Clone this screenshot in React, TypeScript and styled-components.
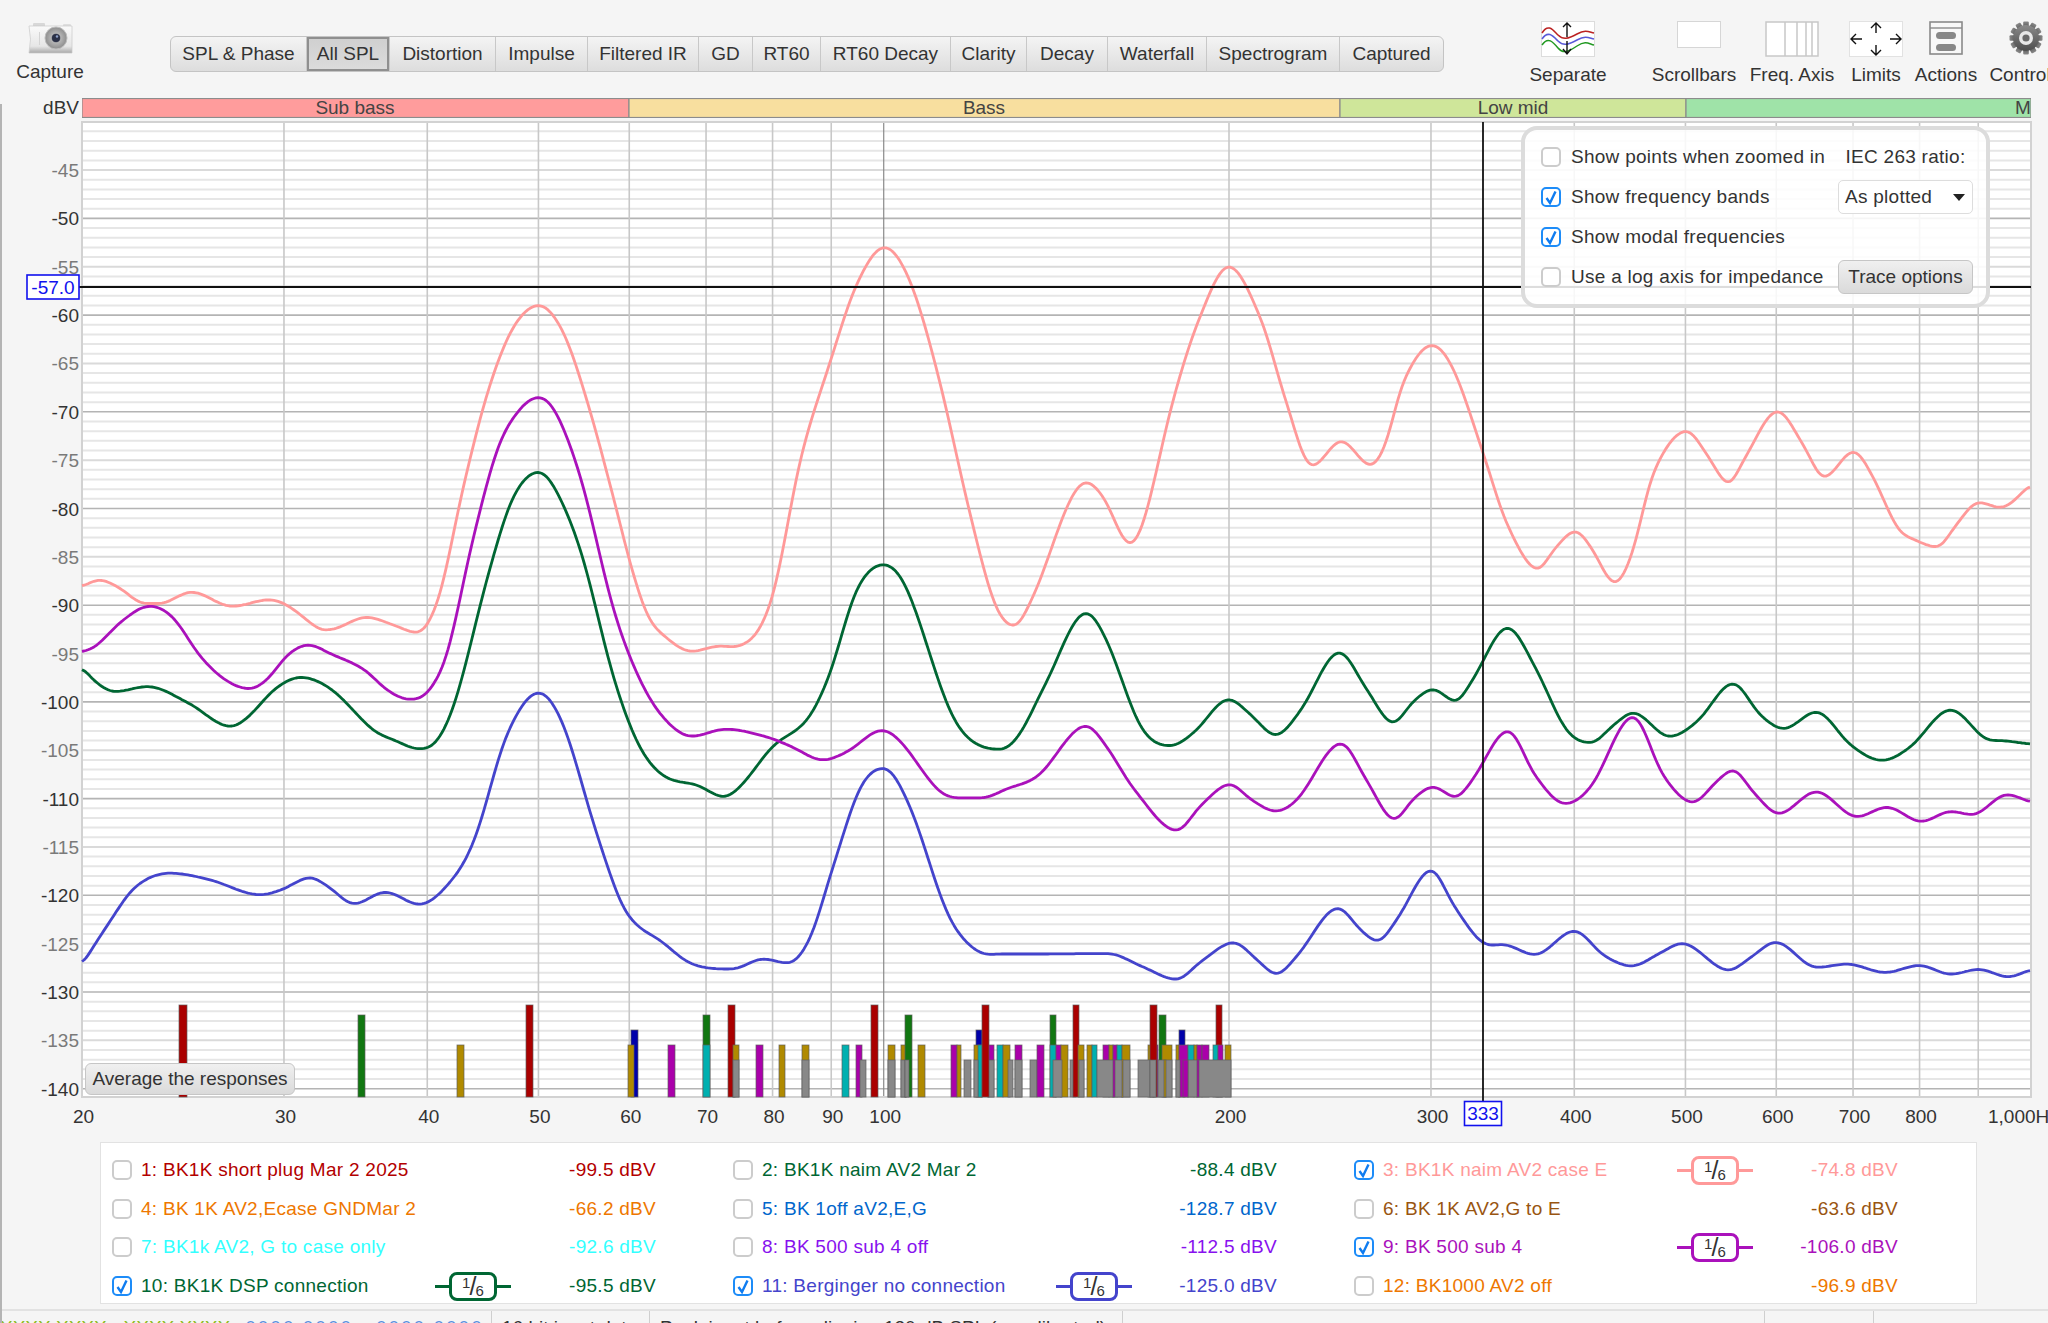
import React from 'react';
import styled, { createGlobalStyle } from 'styled-components';

const GlobalStyle = createGlobalStyle`
  html, body {
    margin: 0;
    padding: 0;
    background: #f5f5f5;
  }
  body {
    font-family: "Liberation Sans", Arial, sans-serif;
    color: #333;
  }
`;

const Page = styled.div`
  width: 2048px;
  height: 1323px;
  overflow: hidden;
  display: flex;
  flex-direction: column;
  background: #f5f5f5;
  font-size: 19px;
`;

const Toolbar = styled.div`
  height: 98px;
  display: flex;
  align-items: flex-start;
  flex-shrink: 0;
`;

const CaptureItem = styled.div`
  width: 70px;
  margin-left: 15px;
  padding-top: 23px;
  display: flex;
  flex-direction: column;
  align-items: center;
`;

const CaptureIcon = styled.div`
  height: 38px;
`;

const Tabs = styled.div`
  margin: 36px 0 0 85px;
  display: flex;
  height: 36px;
  border: 1px solid #c4c4c4;
  border-radius: 6px;
  box-sizing: border-box;
  background: linear-gradient(#f4f4f4, #dddddd);
`;

const Tab = styled.div<{ $active?: boolean; $w: number }>`
  width: ${p => p.$w}px;
  box-sizing: border-box;
  text-align: center;
  line-height: 33px;
  white-space: nowrap;
  border-right: 1px solid #c8c8c8;
  color: #333;
  ${p => p.$active && `
    background: linear-gradient(#cfcfcf, #dcdcdc);
    box-shadow: inset 0 0 0 2px #8f8f8f;
  `}
  &:last-child {
    border-right: none;
  }
`;

const RightTools = styled.div`
  margin-left: auto;
  width: 520px;
  flex-shrink: 0;
  display: flex;
`;

const ToolItem = styled.div<{ $w: number; $ml?: number }>`
  width: ${p => p.$w}px;
  margin-left: ${p => p.$ml || 0}px;
  flex-shrink: 0;
  padding-top: 21px;
  display: flex;
  flex-direction: column;
  align-items: center;
`;

const ToolIcon = styled.div<{ $shift?: number }>`
  height: 43px;
  margin-left: ${p => p.$shift || 0}px;
`;

const ToolLabel = styled.div`
  line-height: 22px;
  white-space: nowrap;
`;

const Main = styled.div`
  position: relative;
  flex: 1;
  display: flex;
  flex-direction: column;
  &::before {
    content: '';
    position: absolute;
    left: 0;
    top: 6px;
    bottom: 14px;
    width: 2px;
    background: #b4b4b4;
  }
`;

const ChartWrap = styled.div`
  position: relative;
  height: 1044px;
  flex-shrink: 0;
`;

const ChartSvg = styled.svg`
  display: block;
`;

const AxisText = styled.text<{ $tone?: string }>`
  font-family: "Liberation Sans", Arial, sans-serif;
  font-size: 19px;
  fill: ${p => p.$tone || '#333'};
`;

const OptionsPanel = styled.div`
  position: absolute;
  top: 28px;
  right: 58px;
  width: 469px;
  height: 182px;
  box-sizing: border-box;
  border: 4px solid #dcdcdc;
  border-radius: 16px;
  background: rgba(255, 255, 255, 0.86);
  padding: 7px 13px 7px 16px;
  display: grid;
  grid-template-columns: 1fr 135px;
  grid-auto-rows: 40px;
  align-items: center;
  color: #333;
  letter-spacing: 0.27px;
`;

const OptionRow = styled.label`
  display: flex;
  align-items: center;
  gap: 10px;
  white-space: nowrap;
`;

const RatioLabel = styled.div`
  justify-self: center;
  white-space: nowrap;
`;

const SelectBox = styled.div`
  height: 34px;
  box-sizing: border-box;
  border: 1px solid #dddddd;
  border-radius: 5px;
  background: #fff;
  display: flex;
  align-items: center;
  justify-content: space-between;
  padding: 0 7px 0 6px;
`;

const Caret = styled.span`
  width: 0;
  height: 0;
  border-left: 6px solid transparent;
  border-right: 6px solid transparent;
  border-top: 7px solid #222;
`;

const GreyButton = styled.div`
  height: 34px;
  box-sizing: border-box;
  border: 1px solid #c6c6c6;
  border-radius: 6px;
  background: linear-gradient(#f0f0f0, #dadada);
  text-align: center;
  line-height: 31px;
  white-space: nowrap;
  letter-spacing: 0;
`;

const AverageButton = styled(GreyButton)`
  position: absolute;
  left: 85px;
  top: 965px;
  width: 210px;
  height: 32px;
  line-height: 29px;
`;

const Check = styled.span<{ $on?: boolean }>`
  width: 20px;
  height: 20px;
  box-sizing: border-box;
  flex-shrink: 0;
  display: inline-flex;
  align-items: center;
  justify-content: center;
  border-radius: 5px;
  border: 2px solid ${p => (p.$on ? '#1d8cf8' : '#cccccc')};
  background: #fff;
`;

const TraceTable = styled.div`
  margin-left: 100px;
  width: 1877px;
  height: 162px;
  box-sizing: border-box;
  border: 1px solid #e2e2e2;
  background: #fff;
  padding: 8px 0 0 11px;
  display: grid;
  grid-template-columns: repeat(3, 621px);
  grid-auto-rows: 38.6px;
  letter-spacing: 0.27px;
`;

const TraceEntry = styled.div<{ $color: string }>`
  display: grid;
  grid-template-columns: 29px 294px 76px 145px;
  align-items: center;
  color: ${p => p.$color};
  white-space: nowrap;
`;

const TraceValue = styled.div`
  text-align: right;
`;

const FilterWrap = styled.div<{ $color: string }>`
  display: flex;
  align-items: center;
  &::before,
  &::after {
    content: '';
    flex: 1;
    height: 3px;
    background: ${p => p.$color};
  }
`;

const FilterBox = styled.div<{ $color: string }>`
  width: 48px;
  height: 29px;
  box-sizing: border-box;
  border: 3px solid ${p => p.$color};
  border-radius: 8px;
  background: #fff;
  color: #333;
  display: flex;
  align-items: center;
  justify-content: center;
  overflow: hidden;
`;

const FilterNum = styled.span<{ $low?: boolean }>`
  font-size: 15px;
  line-height: 15px;
  letter-spacing: 0;
  align-self: ${p => (p.$low ? 'flex-end' : 'flex-start')};
`;

const FilterSlash = styled.span`
  font-size: 25px;
  line-height: 23px;
  font-weight: 400;
  margin: 0 -1px;
`;

const StatusBar = styled.div`
  margin-top: 5px;
  flex: 1;
  display: flex;
  border-top: 2px solid #e2e2e2;
  overflow: hidden;
`;

const StatusCell = styled.div<{ $w: number }>`
  width: ${p => p.$w}px;
  flex-shrink: 0;
  box-sizing: border-box;
  padding: 6px 0 0 10px;
  border-right: 1px solid #cfcfcf;
  white-space: nowrap;
  &:first-child {
    padding-left: 0;
  }
`;

const Green = styled.span`
  color: #8dbb1f;
  margin-right: 15px;
`;

const Blue = styled.span`
  color: #5a8fe0;
  letter-spacing: 2px;
`;

// curve points are read in two crops of the plot, each with its own scale
const leftCrop = (raw: number[][]) => raw.map(([x, y]) => [82 + x / 1.6, 240 + y / 2.063]);
const rightCrop = (raw: number[][]) => raw.map(([x, y]) => [1060 + x / 1.6, 320 + y / 2.306]);

// hermite through the points, sampled every 2px, then blurred a little so the joins don't show
const curvePath = (p: number[][]) => {
  const n = p.length;
  const secant = (i: number) => (p[i + 1][1] - p[i][1]) / (p[i + 1][0] - p[i][0]);
  const slopes = p.map((_, i) => {
    if (i === 0) return secant(0);
    if (i === n - 1) return secant(n - 2);
    const s0 = secant(i - 1);
    const s1 = secant(i);
    if (s0 * s1 <= 0) return 0;
    return (p[i + 1][1] - p[i - 1][1]) / (p[i + 1][0] - p[i - 1][0]);
  });
  const xs: number[] = [];
  let ys: number[] = [];
  let seg = 0;
  for (let x = p[0][0]; x <= p[n - 1][0]; x += 2) {
    while (seg < n - 2 && x > p[seg + 1][0]) seg++;
    const h = p[seg + 1][0] - p[seg][0];
    const t = (x - p[seg][0]) / h;
    const t2 = t * t;
    const t3 = t2 * t;
    xs.push(x);
    ys.push((2 * t3 - 3 * t2 + 1) * p[seg][1] + (t3 - 2 * t2 + t) * h * slopes[seg]
      + (-2 * t3 + 3 * t2) * p[seg + 1][1] + (t3 - t2) * h * slopes[seg + 1]);
  }
  for (let pass = 0; pass < 2; pass++) {
    ys = ys.map((_, i) => {
      let sum = 0;
      for (let k = -2; k <= 2; k++) sum += ys[Math.min(Math.max(i + k, 0), ys.length - 1)];
      return sum / 5;
    });
  }
  return xs.map((x, i) => `${i ? 'L' : 'M'}${x.toFixed(1)} ${ys[i].toFixed(1)}`).join('');
};

const pink = [
  ...leftCrop([[0,715],[28,701],[60,718],[100,750],[125,750],[175,726],[240,756],[300,742],[330,755],[380,803],[395,804],[455,778],[500,795],[535,810],[552,795],[575,720],[610,510],[650,310],[690,180],[731,134],[770,190],[810,340],[850,530],[880,680],[905,775],[930,815],[975,849],[1015,838],[1055,836],[1085,800],[1110,710],[1150,450],[1195,260],[1240,90],[1284,14],[1325,85],[1370,280],[1420,560],[1460,750],[1492,797],[1520,740]]),
  ...rightCrop([[42,373],[70,410],[112,518],[135,460],[180,190],[222,0],[270,-125],[322,0],[360,180],[403,338],[450,278],[497,336],[520,290],[550,140],[595,57],[630,115],[680,320],[715,470],[765,576],[790,530],[825,486],[850,525],[888,608],[915,540],[950,350],[1003,255],[1035,310],[1070,378],[1095,320],[1148,209],[1190,290],[1222,364],[1270,302],[1300,360],[1340,480],[1365,505],[1405,524],[1430,480],[1470,420],[1505,433],[1553,380]]),
];
const purple = [
  ...leftCrop([[0,850],[22,838],[65,785],[108,755],[145,778],[190,860],[230,908],[268,926],[295,908],[330,855],[362,835],[400,855],[450,885],[490,930],[525,948],[555,930],[585,850],[625,620],[665,430],[700,350],[731,324],[760,360],[800,500],[850,760],[890,900],[930,985],[975,1024],[1030,1009],[1095,1025],[1135,1045],[1185,1073],[1225,1055],[1280,1011],[1310,1035],[1370,1135],[1405,1151],[1440,1151],[1480,1132],[1530,1105]]),
  ...rightCrop([[42,935],[75,985],[120,1085],[187,1178],[225,1120],[272,1070],[305,1105],[345,1133],[380,1105],[450,975],[490,1060],[535,1153],[565,1105],[597,1076],[633,1101],[660,1060],[717,946],[760,1050],[808,1116],[850,1075],[917,913],[965,1050],[1013,1113],[1050,1065],[1077,1037],[1110,1090],[1150,1139],[1210,1087],[1275,1146],[1323,1123],[1378,1157],[1425,1133],[1460,1141],[1515,1094],[1553,1112]]),
];
const green = [
  ...leftCrop([[0,882],[25,915],[52,932],[105,921],[170,955],[238,1004],[265,985],[310,925],[350,902],[400,928],[465,1010],[500,1032],[540,1050],[570,1030],[600,940],[650,690],[690,530],[731,478],[760,520],[800,650],[850,900],[890,1040],[930,1105],[985,1125],[1027,1149],[1055,1125],[1105,1045],[1160,990],[1195,900],[1240,720],[1283,669],[1320,720],[1385,960],[1420,1030],[1470,1051],[1500,1020],[1540,920]]),
  ...rightCrop([[42,674],[75,740],[130,940],[177,982],[215,950],[270,874],[305,910],[345,958],[385,900],[447,765],[490,850],[533,930],[565,880],[597,851],[633,880],[660,830],[716,708],[760,800],[810,945],[850,975],[885,935],[917,905],[975,961],[1020,925],[1077,837],[1120,910],[1158,943],[1210,903],[1265,980],[1315,1016],[1360,985],[1425,898],[1480,965],[1510,970],[1553,978]]),
];
const blue = [
  ...leftCrop([[0,1495],[40,1415],[85,1335],[140,1306],[205,1320],[285,1351],[320,1340],[365,1315],[395,1335],[435,1370],[485,1345],[540,1371],[595,1315],[630,1230],[680,1020],[731,933],[770,1000],[820,1210],[860,1360],[885,1410],[925,1445],[975,1493],[1040,1504],[1090,1483],[1130,1492],[1165,1440],[1200,1300],[1245,1130],[1283,1089],[1325,1170],[1385,1390],[1430,1465],[1470,1473],[1520,1473]]),
  ...rightCrop([[78,1461],[130,1490],[187,1521],[225,1480],[278,1435],[315,1475],[346,1509],[380,1465],[445,1355],[480,1405],[508,1433],[540,1380],[594,1267],[630,1350],[675,1435],[715,1441],[760,1464],[823,1408],[870,1465],[915,1490],[960,1460],[995,1437],[1070,1500],[1105,1470],[1145,1434],[1210,1493],[1260,1485],[1320,1505],[1375,1488],[1425,1509],[1470,1497],[1517,1515],[1553,1498]]),
];

const xOf = (f: number) => 82 + 1147 * Math.log10(f / 20);
const yOf = (db: number) => 218.4 + (-50 - db) * 9.67;

const freqLines = [30, 40, 50, 60, 70, 80, 90, 100, 200, 300, 400, 500, 600, 700, 800, 900];
const freqLabels: [number, string][] = [[20, '20'], [30, '30'], [40, '40'], [50, '50'], [60, '60'], [70, '70'], [80, '80'], [90, '90'], [100, '100'], [200, '200'], [300, '300'], [400, '400'], [500, '500'], [600, '600'], [700, '700'], [800, '800']];

const dbLines: number[] = [];
for (let d = -41; d >= -140; d--) dbLines.push(d);
const dbLabels: number[] = [];
for (let d = -45; d >= -140; d -= 5) dbLabels.push(d);

const R = 1005, G = 1015, B = 1030, M = 1045, L = 1060;
const barColors: Record<string, string> = {
  r: '#aa0000', g: '#117711', b: '#0000aa', o: '#b08a00', c: '#00b0b0', m: '#aa00aa', k: '#888888',
};
const bars: [string, number, number, number][] = [
  ['r',179,187,R],['g',358,365,G],['o',457,464,M],['r',526,533,R],['b',631,638,B],['o',628,634,M],['m',668,675,M],
  ['g',703,710,G],['c',703,710,M],['r',728,735,R],['o',733,739,M],['k',733,739,L],['m',756,763,M],['o',779,785,M],
  ['o',802,809,M],['k',802,809,L],['c',842,849,M],['m',856,862,M],['k',860,866,L],['r',871,878,R],['o',888,895,M],['k',888,895,L],
  ['o',901,906,M],['k',901,906,L],['g',905,912,G],['k',905,909,L],['o',918,925,M],['m',951,957,M],['o',957,961,M],['k',964,971,L],
  ['b',976,982,B],['o',974,982,M],['c',978,982,M],['k',974,978,L],['m',988,994,M],['k',988,994,L],['r',982,989,R],
  ['c',997,1003,M],['o',1003,1010,M],['k',1008,1013,L],['m',1015,1022,M],['k',1015,1022,L],['k',1030,1037,L],['m',1037,1044,M],
  ['g',1050,1056,G],['c',1050,1056,M],['m',1056,1061,M],['o',1061,1068,M],['k',1053,1062,L],
  ['k',1070,1076,L],['r',1073,1079,R],['o',1078,1084,M],['k',1079,1084,L],
  ['o',1087,1092,M],['c',1092,1097,M],['m',1103,1109,M],['o',1109,1113,M],['m',1113,1117,M],['c',1117,1122,M],['o',1122,1130,M],
  ['k',1097,1130,L],['m',1113,1115,L],['o',1122,1123,L],
  ['o',1148,1154,M],['m',1153,1158,M],['r',1150,1157,R],['g',1159,1166,G],['o',1162,1172,M],['k',1138,1150,L],['k',1158,1172,L],['k',1150,1156,L],['o',1164,1166,L],
  ['b',1179,1185,B],['o',1176,1179,M],['m',1179,1188,M],['c',1188,1194,M],['o',1194,1197,M],['m',1197,1202,M],['m',1202,1209,M],
  ['r',1216,1222,R],['c',1213,1218,M],['m',1218,1223,M],['o',1225,1231,M],
  ['k',1176,1180,L],['k',1188,1231,L],['m',1183,1188,L],['m',1197,1199,L],
];

const bands: [number, number, string, string, number, 'middle' | 'start'][] = [
  [82, 629, '#ff9c9c', 'Sub bass', 355, 'middle'],
  [629, 1340, '#f8df9f', 'Bass', 984, 'middle'],
  [1340, 1686, '#cfe69a', 'Low mid', 1513, 'middle'],
  [1686, 2031, '#9fe3a8', 'Mid', 2015, 'start'],
];

const tabs: [string, number][] = [
  ['SPL & Phase', 136], ['All SPL', 83], ['Distortion', 106], ['Impulse', 92], ['Filtered IR', 111], ['GD', 54], ['RT60', 68],
  ['RT60 Decay', 130], ['Clarity', 76], ['Decay', 81], ['Waterfall', 99], ['Spectrogram', 133], ['Captured', 103],
];

type Trace = { label: string; value: string; color: string; on?: boolean };

const traces: Trace[] = [
  { label: '1: BK1K short plug Mar 2 2025', value: '-99.5 dBV', color: '#b30000' },
  { label: '2: BK1K naim AV2 Mar 2', value: '-88.4 dBV', color: '#006633' },
  { label: '3: BK1K naim AV2 case E', value: '-74.8 dBV', color: '#ff9999', on: true },
  { label: '4: BK 1K AV2,Ecase GNDMar 2', value: '-66.2 dBV', color: '#ee7700' },
  { label: '5: BK 1off aV2,E,G', value: '-128.7 dBV', color: '#0066cc' },
  { label: '6: BK 1K AV2,G to E', value: '-63.6 dBV', color: '#995511' },
  { label: '7: BK1k AV2, G to case only', value: '-92.6 dBV', color: '#33ffff' },
  { label: '8: BK 500 sub 4 off', value: '-112.5 dBV', color: '#8811ee' },
  { label: '9: BK 500 sub 4', value: '-106.0 dBV', color: '#aa11bb', on: true },
  { label: '10: BK1K DSP connection', value: '-95.5 dBV', color: '#006633', on: true },
  { label: '11: Berginger no connection', value: '-125.0 dBV', color: '#4444cc', on: true },
  { label: '12: BK1000 AV2 off', value: '-96.9 dBV', color: '#ee7700' },
];

const Tick = () => (
  <svg width="14" height="15" viewBox="0 0 14 15">
    <path d="M2.5 8 L6 13 L11.5 1.5" fill="none" stroke="#0f7cf0" strokeWidth="2.4" />
  </svg>
);

const CheckBox = ({ on }: { on?: boolean }) => <Check $on={on}>{on && <Tick />}</Check>;

const CameraIcon = () => (
  <svg width="46" height="32" viewBox="0 0 46 32">
    <defs>
      <linearGradient id="camBody" x1="0" y1="0" x2="0" y2="1">
        <stop offset="0" stopColor="#fafafa" />
        <stop offset="0.75" stopColor="#e6e6e6" />
        <stop offset="1" stopColor="#a8a8a8" />
      </linearGradient>
      <radialGradient id="camLens">
        <stop offset="0" stopColor="#30364a" />
        <stop offset="0.3" stopColor="#555b68" />
        <stop offset="0.45" stopColor="#b4b4b4" />
        <stop offset="1" stopColor="#8d8d8d" />
      </radialGradient>
    </defs>
    <rect x="6" y="0" width="12" height="4" rx="1" fill="#d8d8d8" />
    <rect x="36" y="1" width="8" height="4" rx="1" fill="#dedede" />
    <path d="M2 3 H45 V30 H2 Q5 16 2 3 Z" fill="url(#camBody)" stroke="#c8c8c8" strokeWidth="0.7" />
    <rect x="12" y="9" width="1" height="13" fill="#d4d4d4" />
    <circle cx="29" cy="15" r="11" fill="url(#camLens)" stroke="#bdbdbd" />
    <circle cx="29" cy="15" r="4" fill="#2b3147" />
    <circle cx="30" cy="13.5" r="1.2" fill="#8ea0c8" />
  </svg>
);

const SeparateIcon = () => (
  <svg width="54" height="36" viewBox="0 0 54 36">
    <rect x="0.5" y="0.5" width="53" height="35" fill="#fff" stroke="#dcdcdc" />
    <path d="M1 12 C7 2 12 9 17 14 S27 18 36 13 S48 11 53 12" fill="none" stroke="#bb2222" strokeWidth="1.5" />
    <path d="M1 18 C7 9 12 15 17 20 S27 24 36 19 S48 17 53 18" fill="none" stroke="#5a5ad8" strokeWidth="1.5" />
    <path d="M1 24 C7 15 12 21 17 27 S27 31 36 25 S48 23 53 24" fill="none" stroke="#229922" strokeWidth="1.5" />
    <path d="M26 16 V2 M22 6 L26 2 L30 6 M26 20 V33 M22 28 L26 33 L30 28" fill="none" stroke="#111" strokeWidth="1.4" />
  </svg>
);

const ScrollbarsIcon = () => (
  <svg width="44" height="27" viewBox="0 0 44 27">
    <rect x="0.5" y="0.5" width="43" height="26" fill="#fff" stroke="#d6d6d6" />
  </svg>
);

const FreqAxisIcon = () => (
  <svg width="54" height="36" viewBox="0 0 54 36">
    <rect x="1" y="1" width="52" height="34" fill="#fff" stroke="#c8c8c8" strokeWidth="1.5" />
    <path d="M20 1 V35 M32 1 V35 M41 1 V35 M47 1 V35" stroke="#c8c8c8" strokeWidth="1.5" />
  </svg>
);

const LimitsIcon = () => (
  <svg width="54" height="36" viewBox="0 0 54 36">
    <rect x="0.5" y="0.5" width="53" height="35" fill="#fff" stroke="#e2e2e2" />
    <path d="M27 12 V2 M22 7 L27 2 L32 7 M27 24 V34 M22 29 L27 34 L32 29 M13 18 H2 M7 13 L2 18 L7 23 M41 18 H52 M47 13 L52 18 L47 23" fill="none" stroke="#111" strokeWidth="1.4" />
  </svg>
);

const ActionsIcon = () => (
  <svg width="34" height="34" viewBox="0 0 34 34">
    <rect x="1" y="1" width="32" height="32" fill="#f8f8f8" stroke="#8a8a8a" strokeWidth="1.6" />
    <line x1="1" y1="7" x2="33" y2="7" stroke="#8a8a8a" strokeWidth="1.4" />
    <rect x="7" y="11" width="20" height="7" rx="3.5" fill="#888" />
    <rect x="7" y="23" width="20" height="7" rx="3.5" fill="#888" />
  </svg>
);

const GearIcon = () => (
  <svg width="34" height="34" viewBox="0 0 34 34">
    <defs>
      <linearGradient id="gearFill" x1="0" y1="0" x2="0" y2="1">
        <stop offset="0" stopColor="#8a8a8a" />
        <stop offset="1" stopColor="#4e4e4e" />
      </linearGradient>
    </defs>
    {Array.from({ length: 12 }).map((_, i) => (
      <rect key={i} x="14.2" y="0.5" width="5.6" height="7" rx="1" fill="url(#gearFill)" transform={`rotate(${i * 30} 17 17)`} />
    ))}
    <circle cx="17" cy="17" r="13" fill="url(#gearFill)" />
    <circle cx="17" cy="17" r="7" fill="#e8e8e8" />
    <circle cx="17" cy="17" r="3.6" fill="#6a6a6a" />
  </svg>
);

const FilterBadge = ({ color }: { color: string }) => (
  <FilterWrap $color={color}>
    <FilterBox $color={color}>
      <FilterNum>1</FilterNum>
      <FilterSlash>/</FilterSlash>
      <FilterNum $low>6</FilterNum>
    </FilterBox>
  </FilterWrap>
);

const Chart = () => (
  <ChartSvg width="2048" height="1044" viewBox="0 98 2048 1044">
    <defs>
      <clipPath id="bandClip">
        <rect x="82" y="98" width="1949" height="20" />
      </clipPath>
    </defs>
    <AxisText x="79" y="114" textAnchor="end">dBV</AxisText>
    <g clipPath="url(#bandClip)">
      {bands.map(([a, b, c, t, tx, anchor]) => (
        <g key={t}>
          <rect x={a} y="98.5" width={b - a} height="19" fill={c} stroke="#8c8c8c" strokeWidth="1.2" />
          <AxisText x={tx} y="114" textAnchor={anchor} $tone="#444">{t}</AxisText>
        </g>
      ))}
    </g>

    <rect x="82" y="122" width="1949" height="975" fill="#fff" />
    {dbLines.map(d => {
      const major = d % 10 === 0;
      const mid = d % 5 === 0;
      return (
        <line key={d} x1="82" x2="2031" y1={yOf(d)} y2={yOf(d)}
          stroke={major ? '#b4b4b4' : mid ? '#dadada' : '#e6e6e6'} strokeWidth={major ? 1.6 : 2} />
      );
    })}
    {freqLines.map(f => (
      <line key={f} x1={xOf(f)} x2={xOf(f)} y1="122" y2="1097"
        stroke={f === 100 ? '#8a8a8a' : '#c8c8c8'} strokeWidth={f === 100 ? 1.2 : 1.6} />
    ))}
    <rect x="82" y="122" width="1949" height="975" fill="none" stroke="#d2d2d2" strokeWidth="2" />

    {dbLabels.map(d => (
      <AxisText key={d} x="79" y={yOf(d) + 7} textAnchor="end" $tone={d % 10 === 0 ? '#333' : '#7a7a7a'}>{d}</AxisText>
    ))}
    {freqLabels.map(([f, t]) => (
      <AxisText key={t} x={xOf(f) + 1.5} y="1123" textAnchor="middle">{t}</AxisText>
    ))}
    <AxisText x="1988" y="1123">1,000Hz</AxisText>

    {bars.map(([c, a, b, top], i) => (
      <rect key={i} x={a} y={top} width={b - a} height={1097 - top} fill={barColors[c]} stroke="#5c5c5c" strokeOpacity="0.75" strokeWidth="0.9" />
    ))}

    <path d={curvePath(pink)} fill="none" stroke="#ff9999" strokeWidth="2.8" strokeLinejoin="round" />
    <path d={curvePath(green)} fill="none" stroke="#006633" strokeWidth="2.8" strokeLinejoin="round" />
    <path d={curvePath(purple)} fill="none" stroke="#aa11bb" strokeWidth="2.8" strokeLinejoin="round" />
    <path d={curvePath(blue)} fill="none" stroke="#4444cc" strokeWidth="2.8" strokeLinejoin="round" />

    <line x1="79" x2="2031" y1="287" y2="287" stroke="#111" strokeWidth="1.8" />
    <line x1="1483" x2="1483" y1="122" y2="1101" stroke="#111" strokeWidth="1.8" />
    <rect x="27" y="275" width="52" height="24" fill="#fff" stroke="#1111ee" strokeWidth="1.6" />
    <AxisText x="53" y="294" textAnchor="middle" $tone="#1111ee">-57.0</AxisText>
    <rect x="1464.5" y="1101.5" width="37" height="24" fill="#fff" stroke="#1111ee" strokeWidth="1.6" />
    <AxisText x="1483" y="1120" textAnchor="middle" $tone="#1111ee">333</AxisText>
  </ChartSvg>
);

const App: React.FC = () => (
  <Page>
    <GlobalStyle />
    <Toolbar>
      <CaptureItem>
        <CaptureIcon><CameraIcon /></CaptureIcon>
        <ToolLabel>Capture</ToolLabel>
      </CaptureItem>
      <Tabs>
        {tabs.map(([t, w]) => <Tab key={t} $w={w} $active={t === 'All SPL'}>{t}</Tab>)}
      </Tabs>
      <RightTools>
        <ToolItem $w={80}>
          <ToolIcon><SeparateIcon /></ToolIcon>
          <ToolLabel>Separate</ToolLabel>
        </ToolItem>
        <ToolItem $w={88} $ml={42}>
          <ToolIcon $shift={10}><ScrollbarsIcon /></ToolIcon>
          <ToolLabel>Scrollbars</ToolLabel>
        </ToolItem>
        <ToolItem $w={88} $ml={10}>
          <ToolIcon><FreqAxisIcon /></ToolIcon>
          <ToolLabel>Freq. Axis</ToolLabel>
        </ToolItem>
        <ToolItem $w={64} $ml={8}>
          <ToolIcon><LimitsIcon /></ToolIcon>
          <ToolLabel>Limits</ToolLabel>
        </ToolItem>
        <ToolItem $w={66} $ml={5}>
          <ToolIcon><ActionsIcon /></ToolIcon>
          <ToolLabel>Actions</ToolLabel>
        </ToolItem>
        <ToolItem $w={60} $ml={11}>
          <ToolIcon $shift={12}><GearIcon /></ToolIcon>
          <ToolLabel>Control</ToolLabel>
        </ToolItem>
      </RightTools>
    </Toolbar>

    <Main>
      <ChartWrap>
        <Chart />
        <OptionsPanel>
          <OptionRow><CheckBox />Show points when zoomed in</OptionRow>
          <RatioLabel>IEC 263 ratio:</RatioLabel>
          <OptionRow><CheckBox on />Show frequency bands</OptionRow>
          <SelectBox>As plotted<Caret /></SelectBox>
          <OptionRow><CheckBox on />Show modal frequencies</OptionRow>
          <div />
          <OptionRow><CheckBox />Use a log axis for impedance</OptionRow>
          <GreyButton>Trace options</GreyButton>
        </OptionsPanel>
        <AverageButton>Average the responses</AverageButton>
      </ChartWrap>

      <TraceTable>
        {traces.map(t => (
          <TraceEntry key={t.label} $color={t.color}>
            <CheckBox on={t.on} />
            <div>{t.label}</div>
            {t.on ? <FilterBadge color={t.color} /> : <div />}
            <TraceValue>{t.value}</TraceValue>
          </TraceEntry>
        ))}
      </TraceTable>

      <StatusBar>
        <StatusCell $w={492}>
          <Green>XXXX XXXX - XXXX XXXX</Green>
          <Blue>0000 0000 - 0000 0000</Blue>
        </StatusCell>
        <StatusCell $w={158}>16 bit input data</StatusCell>
        <StatusCell $w={473}>Peak input before clipping 120 dB SPL (uncalibrated)</StatusCell>
        <StatusCell $w={642} />
        <StatusCell $w={109} />
      </StatusBar>
    </Main>
  </Page>
);

export default App;
